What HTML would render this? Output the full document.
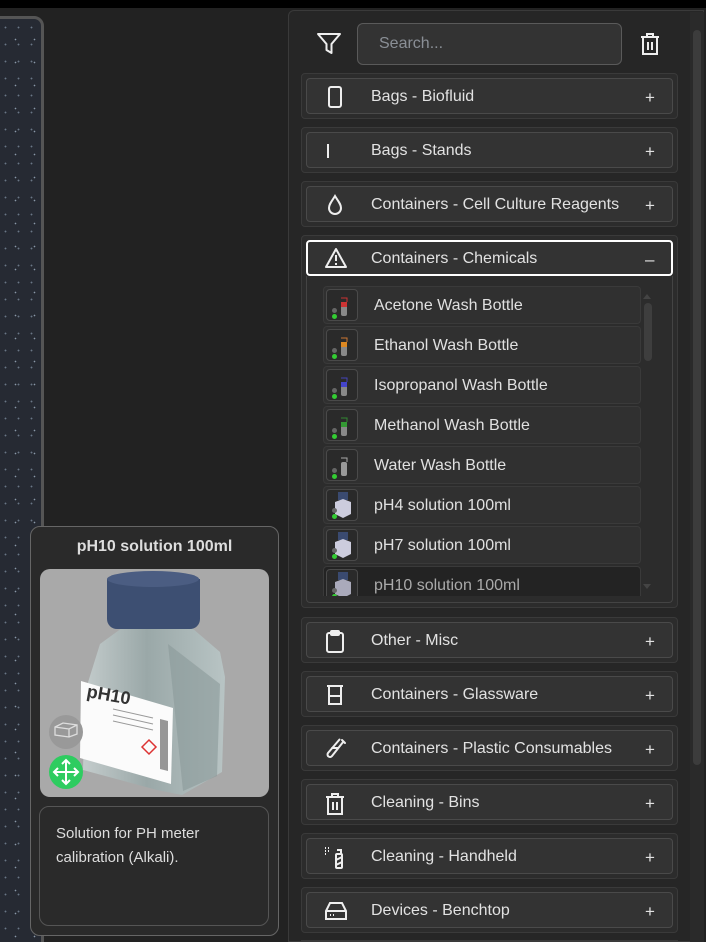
<!DOCTYPE html>
<html><head><style>
*{box-sizing:border-box;margin:0;padding:0}
html,body{width:706px;height:942px;overflow:hidden}
body{background:#222;position:relative;font-family:"Liberation Sans",sans-serif;color:#ddd}
.abs{position:absolute}
.tex{left:-4px;top:16px;width:48px;height:940px;border:3px solid #555;border-radius:0 10px 0 0;background:#262a33;
background-image:radial-gradient(circle,#6a7686 0.7px,transparent 1.1px),radial-gradient(circle,#8a98a8 0.6px,transparent 1px);
background-size:13px 17px,19px 23px;background-position:0 0,7px 9px}
.panel{left:288px;top:10px;width:416px;height:932px;background:#262626;border:1px solid #3a3a3a;border-radius:6px 0 0 0}
.grp{position:absolute;left:301px;width:377px;background:#2c2c2c;border:1px solid #3a3a3a;border-radius:4px}
.hdr{position:absolute;left:306px;width:367px;height:36px;background:#333;border:1px solid #4a4a4a;border-radius:4px;font-size:16px;line-height:35px;color:#e2e2e2}
.hdr .t{position:absolute;left:64px}
.hdr .p{position:absolute;left:338px;font-size:17px;top:1px}
.hdr svg{position:absolute;left:17px;top:7px}
.item{position:absolute;left:323px;width:318px;height:38px;background:#303030;border:1px solid #3a3a3a;border-radius:4px;font-size:16px;line-height:37px;color:#e0e0e0}
.item span{position:absolute;left:50px}
.th{position:absolute;left:2px;top:2px;width:32px;height:32px;border:1px solid #4a4a4a;border-radius:4px;background:#2a2a2a}
.th i{position:absolute;left:5px;width:5px;height:5px;border-radius:50%}
</style></head><body>
<div class="abs" style="left:0;top:0;width:706px;height:8px;background:#000"></div>
<div class="abs tex"></div>
<div class="abs panel"></div>
<div class="abs" style="left:690px;top:12px;width:14px;height:930px;background:#2a2a2a"></div>
<div class="abs" style="left:693px;top:30px;width:8px;height:735px;background:#3c3c3c;border-radius:4px"></div>

<svg class="abs" style="left:316px;top:32px" width="26" height="24" viewBox="0 0 26 24" fill="none" stroke="#eee" stroke-width="2" stroke-linejoin="round"><path d="M2 2h22l-8.5 10v9l-5-3v-6z"/></svg>
<div class="abs" style="left:357px;top:23px;width:265px;height:42px;background:#333;border:1px solid #5a5a5a;border-radius:6px;font-size:16px;line-height:40px;padding-left:21px;color:#8a8f96">Search...</div>
<svg class="abs" style="left:639px;top:32px" width="22" height="24" viewBox="0 0 22 24" fill="none" stroke="#eee" stroke-width="2"><path d="M2 5h18M8 5V2h6v3M4 5v17h14V5M9 10v8M13 10v8"/></svg>

<div class="grp" style="top:73px;height:46px"></div>
<div class="hdr" style="top:78px"><svg width="22" height="22" fill="none" stroke="#eee" stroke-width="2"><rect x="5" y="1" width="12" height="20" rx="2"/></svg><span class="t">Bags - Biofluid</span><span class="p">+</span></div>
<div class="grp" style="top:127px;height:46px"></div>
<div class="hdr" style="top:132px"><svg width="22" height="22" fill="none" stroke="#eee" stroke-width="2"><path d="M4 4v14"/></svg><span class="t">Bags - Stands</span><span class="p">+</span></div>
<div class="grp" style="top:181px;height:46px"></div>
<div class="hdr" style="top:186px"><svg width="22" height="22" fill="none" stroke="#eee" stroke-width="2"><path d="M11 2C8 7 5 10 5 14a6 6 0 0012 0c0-4-3-7-6-12z"/></svg><span class="t">Containers - Cell Culture Reagents</span><span class="p">+</span></div>
<div class="grp" style="top:235px;height:373px"></div>
<div class="hdr" style="top:240px;border:2px solid #fff;line-height:33px"><svg width="24" height="22" style="left:16px;top:5px" fill="none" stroke="#eee" stroke-width="2" stroke-linejoin="round"><path d="M12 2L2 20h20z M12 8v6 M12 16v2"/></svg><span class="t" style="left:63px">Containers - Chemicals</span><span class="p" style="left:337px">–</span></div>
<div class="abs" style="left:306px;top:276px;width:367px;height:327px;border:1px solid #444;border-top:none;border-radius:0 0 4px 4px;background:#2c2c2c"></div>
<div class="abs" style="left:643px;top:290px;width:0;height:0;border:4px solid transparent;border-bottom:5px solid #444"></div>
<div class="abs" style="left:644px;top:303px;width:8px;height:58px;background:#3e3e3e;border-radius:4px"></div>
<div class="abs" style="left:643px;top:584px;width:0;height:0;border:4px solid transparent;border-top:5px solid #444"></div>

<div class="abs" style="left:0;top:0;width:706px;height:596px;overflow:hidden">
<div class="item" style="top:286px"><div class="th"><svg width="30" height="30" class="abs" style="left:0;top:0"><path d="M14 8h6v4" stroke="#c33" fill="none"/><rect x="14" y="12" width="6" height="14" rx="2" fill="#888"/><rect x="14" y="12" width="6" height="5" fill="#c33"/></svg><i style="top:18px;background:#666"></i><i style="top:24px;background:#3c3"></i></div><span>Acetone Wash Bottle</span></div>
<div class="item" style="top:326px"><div class="th"><svg width="30" height="30" class="abs" style="left:0;top:0"><path d="M14 8h6v4" stroke="#c73" fill="none"/><rect x="14" y="12" width="6" height="14" rx="2" fill="#888"/><rect x="14" y="12" width="6" height="5" fill="#d82"/></svg><i style="top:18px;background:#666"></i><i style="top:24px;background:#3c3"></i></div><span>Ethanol Wash Bottle</span></div>
<div class="item" style="top:366px"><div class="th"><svg width="30" height="30" class="abs" style="left:0;top:0"><path d="M14 8h6v4" stroke="#44b" fill="none"/><rect x="14" y="12" width="6" height="14" rx="2" fill="#888"/><rect x="14" y="12" width="6" height="5" fill="#44c"/></svg><i style="top:18px;background:#666"></i><i style="top:24px;background:#3c3"></i></div><span>Isopropanol Wash Bottle</span></div>
<div class="item" style="top:406px"><div class="th"><svg width="30" height="30" class="abs" style="left:0;top:0"><path d="M14 8h6v4" stroke="#383" fill="none"/><rect x="14" y="12" width="6" height="14" rx="2" fill="#888"/><rect x="14" y="12" width="6" height="5" fill="#393"/></svg><i style="top:18px;background:#666"></i><i style="top:24px;background:#3c3"></i></div><span>Methanol Wash Bottle</span></div>
<div class="item" style="top:446px"><div class="th"><svg width="30" height="30" class="abs" style="left:0;top:0"><path d="M14 8h6v4" stroke="#aaa" fill="none"/><rect x="14" y="12" width="6" height="14" rx="2" fill="#999"/></svg><i style="top:18px;background:#666"></i><i style="top:24px;background:#3c3"></i></div><span>Water Wash Bottle</span></div>
<div class="item" style="top:486px"><div class="th"><svg width="30" height="30" class="abs" style="left:0;top:0"><rect x="11" y="2" width="10" height="8" fill="#3a4a70"/><path d="M8 12l8-3 8 3v12l-8 4-8-4z" fill="#ccd"/></svg><i style="top:18px;background:#666"></i><i style="top:24px;background:#3c3"></i></div><span>pH4 solution 100ml</span></div>
<div class="item" style="top:526px"><div class="th"><svg width="30" height="30" class="abs" style="left:0;top:0"><rect x="11" y="2" width="10" height="8" fill="#3a4a70"/><path d="M8 12l8-3 8 3v12l-8 4-8-4z" fill="#ccd"/></svg><i style="top:18px;background:#666"></i><i style="top:24px;background:#3c3"></i></div><span>pH7 solution 100ml</span></div>
<div class="item" style="top:566px;background:#232323;color:#aaa"><div class="th"><svg width="30" height="30" class="abs" style="left:0;top:0"><rect x="11" y="2" width="10" height="8" fill="#3a4a70"/><path d="M8 12l8-3 8 3v12l-8 4-8-4z" fill="#aab"/></svg><i style="top:18px;background:#666"></i><i style="top:24px;background:#3c3"></i></div><span>pH10 solution 100ml</span></div>
</div>

<div class="grp" style="top:617px;height:46px"></div>
<div class="hdr" style="top:622px"><svg width="22" height="24" fill="none" stroke="#eee" stroke-width="2"><rect x="3" y="3" width="16" height="19" rx="2"/><rect x="7" y="1" width="8" height="4" rx="1"/></svg><span class="t">Other - Misc</span><span class="p">+</span></div>
<div class="grp" style="top:671px;height:46px"></div>
<div class="hdr" style="top:676px"><svg width="22" height="22" fill="none" stroke="#eee" stroke-width="2"><path d="M3 2h16M5 2v18h12V2M5 12h12"/></svg><span class="t">Containers - Glassware</span><span class="p">+</span></div>
<div class="grp" style="top:725px;height:46px"></div>
<div class="hdr" style="top:730px"><svg width="24" height="22" fill="none" stroke="#eee" stroke-width="2" stroke-linecap="round"><path d="M18 2l3 3M19.5 3.5L8 18a2.5 2.5 0 01-4-3L15.5 1.5M8 10h6"/></svg><span class="t">Containers - Plastic Consumables</span><span class="p">+</span></div>
<div class="grp" style="top:779px;height:46px"></div>
<div class="hdr" style="top:784px"><svg width="22" height="24" fill="none" stroke="#eee" stroke-width="2"><path d="M2 5h18M8 5V2h6v3M4 5v17h14V5M9 10v8M13 10v8"/></svg><span class="t">Cleaning - Bins</span><span class="p">+</span></div>
<div class="grp" style="top:833px;height:46px"></div>
<div class="hdr" style="top:838px"><svg width="24" height="24" fill="none" stroke="#eee" stroke-width="2"><path d="M1 2h1M4 2h1M1 5h1M4 5h1M1 8h1" /><rect x="12" y="8" width="6" height="14" rx="1"/><path d="M13 4h4v4M12 14l6-3M12 19l6-3"/></svg><span class="t">Cleaning - Handheld</span><span class="p">+</span></div>
<div class="grp" style="top:887px;height:46px"></div>
<div class="hdr" style="top:892px"><svg width="24" height="22" fill="none" stroke="#eee" stroke-width="2"><path d="M6 3h12l4 8v8H2v-8zM2 11h20M6 15h1M9 15h1"/></svg><span class="t">Devices - Benchtop</span><span class="p">+</span></div>
<div class="abs" style="left:301px;top:940px;width:377px;height:2px;background:#3a3a3a"></div>

<div class="abs" style="left:30px;top:526px;width:249px;height:410px;background:#2a2a2a;border:1px solid #666;border-radius:10px"></div>
<div class="abs" style="left:30px;top:538px;width:249px;text-align:center;font-weight:bold;font-size:16px;color:#ddd">pH10 solution 100ml</div>
<div class="abs" style="left:40px;top:569px;width:229px;height:228px;background:#a9a9a9;border-radius:10px;overflow:hidden">
<svg width="229" height="228" viewBox="0 0 229 228">
<defs><linearGradient id="g" x1="0" x2="1"><stop offset="0" stop-color="#c4cccc"/><stop offset="0.45" stop-color="#9aa8a8"/><stop offset="1" stop-color="#b8c4c4"/></linearGradient></defs>
<path d="M60 75l22-16 70 0 28 24 5 25 -3 95-40 23-25 -5-74-20 2-78z" fill="url(#g)"/>
<path d="M128 75l52 40-3 92-34 15z" fill="#8a9999" opacity="0.6"/>
<path d="M41 112l92 27-2 76-91-26z" fill="#fbfbfb"/>
<text x="46" y="128" font-size="18" font-weight="bold" fill="#333" font-family="Liberation Sans" transform="rotate(10 46 128)">pH10</text>
<path d="M73 140l40 9M73 146l40 9M73 152l40 9" stroke="#999" stroke-width="1"/>
<path d="M102 178l7-7 7 7-7 7z" fill="none" stroke="#d33" stroke-width="1.5"/>
<path d="M120 150l8 2v50l-8-2z" fill="#555" opacity="0.6"/>
<path d="M67 10v40a10 10 0 0010 10h73a10 10 0 0010-10V10z" fill="#3d4f72"/>
<ellipse cx="113" cy="10" rx="46" ry="8" fill="#4b5d82"/>
<circle cx="26" cy="163" r="17" fill="#999"/>
<path d="M15 158l8-4 14 2v9l-8 3-14-2z M15 158l14 2 8-4 M29 160v8" fill="none" stroke="#ddd" stroke-width="1.3"/>
<circle cx="26" cy="203" r="17" fill="#2ecc60"/>
<path d="M26 191v24M14 203h24M22 195l4-4 4 4M22 211l4 4 4-4M18 199l-4 4 4 4M34 199l4 4-4 4" fill="none" stroke="#fff" stroke-width="2"/>
</svg></div>
<div class="abs" style="left:39px;top:806px;width:230px;height:120px;border:1px solid #555;border-radius:10px;padding:15px 0 0 16px;font-size:15px;line-height:24px;color:#ddd">Solution for PH meter<br>calibration (Alkali).</div>
</body></html>
